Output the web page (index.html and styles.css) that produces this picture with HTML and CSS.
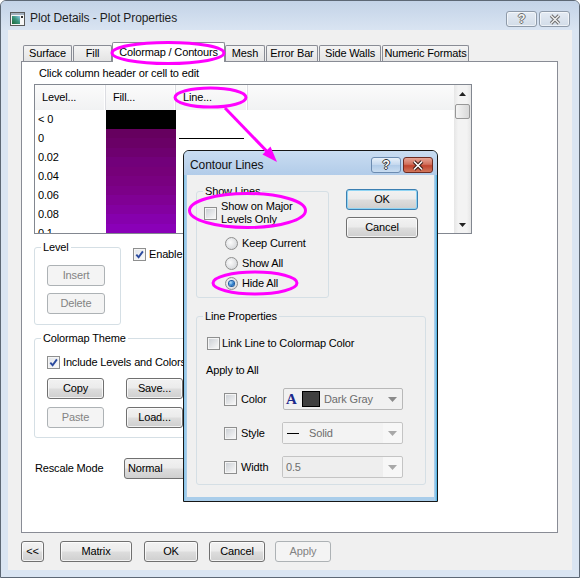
FILE: index.html
```html
<!DOCTYPE html>
<html lang="en">
<head>
<meta charset="utf-8">
<title>Plot Details - Plot Properties</title>
<link rel="stylesheet" href="styles.css">
</head>
<body>
<div class="win">
  <div class="titlebar">
    <svg class="appicon" width="15" height="14" viewBox="0 0 15 14">
      <defs>
        <linearGradient id="ig" x1="0" y1="1" x2="1" y2="0">
          <stop offset="0" stop-color="#1b6a3a"/>
          <stop offset="0.55" stop-color="#3c9680"/>
          <stop offset="1" stop-color="#93c6e8"/>
        </linearGradient>
      </defs>
      <rect x="0.5" y="0.5" width="14" height="13" fill="#f6f6f6" stroke="#5a5a5a"/>
      <rect x="1" y="1" width="13" height="2" fill="#a2afbe"/>
      <rect x="2" y="4" width="8" height="8" fill="url(#ig)"/>
      <rect x="11" y="4" width="2" height="2" fill="#333"/>
    </svg>
    <span class="wtitle">Plot Details - Plot Properties</span>
    <span class="capbtn help">?</span>
    <span class="capbtn close">
      <svg width="16" height="11" viewBox="0 0 16 11"><path d="M4 1.5 L12 9.5 M12 1.5 L4 9.5" stroke="#6e6e6e" stroke-width="3.4" fill="none"/><path d="M4 1.5 L12 9.5 M12 1.5 L4 9.5" stroke="#f2f2f2" stroke-width="1.4" fill="none"/></svg>
    </span>
  </div>

  <div class="client">
    <div class="tabs">
      <div class="tab t-surface">Surface</div>
      <div class="tab t-fill">Fill</div>
      <div class="tab sel t-cmap">Colormap / Contours</div>
      <div class="tab t-mesh">Mesh</div>
      <div class="tab t-err">Error Bar</div>
      <div class="tab t-side">Side Walls</div>
      <div class="tab t-num">Numeric Formats</div>
    </div>

    <div class="panel">
      <div class="hint">Click column header or cell to edit</div>

      <div class="grid">
        <div class="gcols">
          <div class="ghead">
            <div class="hc">Level...</div>
            <div class="hc">Fill...</div>
            <div class="hc">Line...</div>
            <div class="hc last"></div>
          </div>
          <div class="grow"><div class="lv">&lt; 0</div><div class="fill f0"></div><div class="ln"></div><div></div></div>
          <div class="grow"><div class="lv">0</div><div class="fill f1"></div><div class="ln"><span class="stroke"></span></div><div></div></div>
          <div class="grow"><div class="lv">0.02</div><div class="fill f2"></div><div class="ln"></div><div></div></div>
          <div class="grow"><div class="lv">0.04</div><div class="fill f3"></div><div class="ln"></div><div></div></div>
          <div class="grow"><div class="lv">0.06</div><div class="fill f4"></div><div class="ln"></div><div></div></div>
          <div class="grow"><div class="lv">0.08</div><div class="fill f5"></div><div class="ln"></div><div></div></div>
          <div class="grow"><div class="lv">0.1</div><div class="fill f6"></div><div class="ln"></div><div></div></div>
        </div>
        <div class="vscroll">
          <div class="sarrow"><svg width="7" height="4" viewBox="0 0 7 4"><path d="M0 4 L3.5 0 L7 4 Z" fill="#222"/></svg></div>
          <div class="thumb"></div>
          <div class="sgap"></div>
          <div class="sarrow"><svg width="7" height="4" viewBox="0 0 7 4"><path d="M0 0 L3.5 4 L7 0 Z" fill="#222"/></svg></div>
        </div>
      </div>

      <div class="row1">
        <div class="grp level">
          <div class="gt">Level</div>
          <div class="btn dis b-insert">Insert</div>
          <div class="btn dis b-delete">Delete</div>
        </div>
        <div class="chkrow enable"><span class="cb on"><svg width="9" height="9" viewBox="0 0 9 9"><path d="M1.3 4.6 L3.6 7.2 L7.9 1.4" stroke="#2b4a9e" stroke-width="1.9" fill="none"/></svg></span><span class="clbl">Enable Contours</span></div>
      </div>

      <div class="grp theme">
        <div class="gt">Colormap Theme</div>
        <div class="chkrow incl"><span class="cb on"><svg width="9" height="9" viewBox="0 0 9 9"><path d="M1.3 4.6 L3.6 7.2 L7.9 1.4" stroke="#2b4a9e" stroke-width="1.9" fill="none"/></svg></span><span class="clbl">Include Levels and Colors</span></div>
        <div class="brow first">
          <div class="btn b-57">Copy</div>
          <div class="btn b-57 b-right">Save...</div>
        </div>
        <div class="brow">
          <div class="btn dis b-57">Paste</div>
          <div class="btn b-57 b-right">Load...</div>
        </div>
      </div>

      <div class="rescale">
        <span class="rlbl">Rescale Mode</span>
        <div class="select">Normal</div>
      </div>
    </div>

    <div class="bottombar">
      <div class="btn bb-back">&lt;&lt;</div>
      <div class="btn bb-matrix">Matrix</div>
      <div class="btn bb-ok">OK</div>
      <div class="btn bb-cancel">Cancel</div>
      <div class="btn dis bb-apply">Apply</div>
    </div>
  </div>

  <div class="dlg">
    <div class="dtitle">
      <span class="dtext">Contour Lines</span>
      <span class="dcap dhelp">?</span>
      <span class="dcap dclose">
        <svg width="16" height="11" viewBox="0 0 16 11"><path d="M4 1.5 L12 9.5 M12 1.5 L4 9.5" stroke="#3a1a14" stroke-width="3.6" fill="none"/><path d="M4 1.5 L12 9.5 M12 1.5 L4 9.5" stroke="#ffffff" stroke-width="1.6" fill="none"/></svg>
      </span>
    </div>
    <div class="dclient">
      <div class="dtop">
        <div class="grp dg show">
          <div class="gt">Show Lines</div>
          <div class="chkrow major"><span class="cb"></span><span class="clbl two">Show on Major<br>Levels Only</span></div>
          <div class="radrow first"><span class="rb"></span><span class="rlb">Keep Current</span></div>
          <div class="radrow"><span class="rb"></span><span class="rlb">Show All</span></div>
          <div class="radrow"><span class="rb on"></span><span class="rlb">Hide All</span></div>
        </div>
        <div class="dbtns">
          <div class="btn def">OK</div>
          <div class="btn d-cancel">Cancel</div>
        </div>
      </div>
      <div class="grp dg props">
        <div class="gt">Line Properties</div>
        <div class="chkrow link"><span class="cb"></span><span class="clbl tight">Link Line to Colormap Color</span></div>
        <div class="applyall">Apply to All</div>
        <div class="prow first">
          <span class="cb"></span><span class="plbl wide">Color</span>
          <div class="combo ccolor">
            <span class="glyphA">A</span><span class="swatch"></span><span class="ctext">Dark Gray</span>
            <span class="carrow"><svg width="9" height="5" viewBox="0 0 9 5"><path d="M0 0 L9 0 L4.5 5 Z" fill="#8a8a8a"/></svg></span>
          </div>
        </div>
        <div class="prow">
          <span class="cb"></span><span class="plbl">Style</span>
          <div class="combo cdis">
            <div class="cfield"><span class="dash"></span><span class="ctext">Solid</span></div>
            <span class="carrow"><svg width="9" height="5" viewBox="0 0 9 5"><path d="M0 0 L9 0 L4.5 5 Z" fill="#a8a8a8"/></svg></span>
          </div>
        </div>
        <div class="prow">
          <span class="cb"></span><span class="plbl">Width</span>
          <div class="combo cdis">
            <div class="cfield gray"><span class="ctext dark">0.5</span></div>
            <span class="carrow"><svg width="9" height="5" viewBox="0 0 9 5"><path d="M0 0 L9 0 L4.5 5 Z" fill="#a8a8a8"/></svg></span>
          </div>
        </div>
      </div>
    </div>
  </div>

  <svg class="annot" width="580" height="578" viewBox="0 0 580 578">
    <g fill="none" stroke="#ff00ff" stroke-width="3">
      <ellipse cx="168" cy="53" rx="56" ry="10.5"/>
      <ellipse cx="210.5" cy="97.5" rx="35.5" ry="9.5"/>
      <line x1="225" y1="108" x2="268" y2="152.5"/>
      <ellipse cx="247.5" cy="210.5" rx="58" ry="17"/>
      <ellipse cx="255" cy="283" rx="42" ry="11"/>
    </g>
    <polygon points="277,162 262.5,154.5 270.5,146.5" fill="#ff00ff"/>
  </svg>
</div>
</body>
</html>
```

FILE: styles.css
```css
* { box-sizing: border-box; }
html, body { margin: 0; padding: 0; }
body {
  width: 580px;
  height: 578px;
  overflow: hidden;
  font-family: "Liberation Sans", Arial, sans-serif;
  font-size: 11px;
  letter-spacing: -0.15px;
  line-height: 13px;
  color: #000;
  background: #fff;
}

/* ---------- main window ---------- */
.win {
  position: relative;
  width: 580px;
  height: 578px;
  border: 1px solid #5d6875;
  border-radius: 6px 6px 0 0;
  background: #dae5f2;
  padding: 0 7px 7px;
}
.titlebar {
  height: 29px;
  margin: 0 -7px;
  padding: 0 9px;
  display: flex;
  align-items: flex-start;
  background: linear-gradient(#c3d3e7, #d9e4f2);
  border-radius: 5px 5px 0 0;
}
.appicon { flex: none; margin-top: 11px; }
.wtitle {
  flex: 1;
  margin: 10px 0 0 5px;
  font-size: 12px;
  letter-spacing: -0.1px;
  line-height: 15px;
  color: #1e1e1e;
}
.capbtn {
  flex: none;
  width: 31px;
  height: 16px;
  margin-top: 10px;
  border: 1px solid #8e9aa9;
  border-radius: 3px;
  background: linear-gradient(#e4ebf4, #d2dce8);
  box-shadow: inset 0 0 0 1px rgba(255,255,255,.6);
  display: flex;
  align-items: center;
  justify-content: center;
}
.capbtn.help {
  font-weight: bold;
  font-size: 12px;
  color: #f4f4f4;
  text-shadow: 1px 0 0 #6e6e6e, -1px 0 0 #6e6e6e, 0 1px 0 #6e6e6e, 0 -1px 0 #6e6e6e;
}
.capbtn.close { margin-left: 2px; }

.client {
  height: 540px;
  background: #f0f0f0;
  padding: 12px 0 0 13px;
}

/* ---------- tabs ---------- */
.tabs {
  display: flex;
  align-items: flex-end;
  height: 19px;
}
.tab {
  flex: none;
  height: 16px;
  border: 1px solid #898c95;
  border-bottom: none;
  border-radius: 2px 2px 0 0;
  background: linear-gradient(#f4f4f4, #e4e4e4);
  display: flex;
  align-items: center;
  justify-content: center;
  white-space: nowrap;
}
.tab.sel {
  height: 20px;
  margin-bottom: -1px;
  background: #fff;
  position: relative;
  z-index: 1;
}
.t-surface { width: 49px; margin-left: 2px; }
.t-fill { width: 39px; margin-left: 1px; }
.t-cmap { width: 113px; }
.t-mesh { width: 40px; }
.t-err { width: 52px; margin-left: 1px; }
.t-side { width: 62px; margin-left: 1px; }
.t-num { width: 87px; margin-left: 1px; }

/* ---------- tab panel ---------- */
.panel {
  width: 537px;
  height: 472px;
  border: 1px solid #898c95;
  background: #fff;
  padding: 5px 0 0 12px;
}
.hint { margin-left: 5px; }

.grid {
  margin-top: 4px;
  width: 438px;
  height: 150px;
  border: 1px solid #828790;
  display: flex;
  overflow: hidden;
}
.gcols { flex: 1; overflow: hidden; }
.ghead {
  display: grid;
  grid-template-columns: 71px 70px 72px 1fr;
  height: 25px;
  background: linear-gradient(#fbfbfb, #f1f2f3);
}
.hc {
  border-right: 1px solid #dcdde2;
  box-shadow: inset -1px 0 0 #fff;
  padding-left: 7px;
  display: flex;
  align-items: center;
}
.hc.last { border-right: none; box-shadow: none; }
.grow {
  display: grid;
  grid-template-columns: 71px 70px 72px 1fr;
  height: 19px;
}
.lv { padding-left: 3px; line-height: 19px; }
.fill { height: 19px; }
.f0 { background: #000; }
.f1 { background: linear-gradient(#66005f 50%, #6a0066 50%); }
.f2 { background: linear-gradient(#6e006f 50%, #72007a 50%); }
.f3 { background: linear-gradient(#760079 50%, #790080 50%); }
.f4 { background: linear-gradient(#7c0088 50%, #800094 50%); }
.f5 { background: linear-gradient(#8300a0 50%, #8600ad 50%); }
.f6 { background: linear-gradient(#8a00b8 50%, #8e00c6 50%); }
.ln { display: flex; align-items: center; }
.stroke {
  display: block;
  margin-left: 3px;
  width: 65px;
  height: 1px;
  background: #000;
}
.vscroll {
  flex: none;
  width: 17px;
  display: flex;
  flex-direction: column;
  align-items: center;
  background: linear-gradient(90deg, #e6e6e6, #f3f3f3 25%, #f3f3f3 75%, #e6e6e6);
}
.sarrow {
  height: 17px;
  width: 17px;
  display: flex;
  align-items: center;
  justify-content: center;
}
.thumb {
  margin-top: 2px;
  width: 15px;
  height: 15px;
  border: 1px solid #979797;
  border-radius: 2px;
  background: linear-gradient(90deg, #f4f4f4, #e6e6e6 50%, #d8d8d8);
}
.sgap { flex: 1; }

/* ---------- group boxes ---------- */
.grp {
  border: 1px solid #d5dfe5;
  border-radius: 3px;
}
.gt {
  display: table;
  margin: -7px 0 0 6px;
  padding: 0 2px;
  background: #fff;
  line-height: 13px;
}

.row1 {
  display: flex;
  align-items: flex-start;
  margin-top: 13px;
}
.grp.level {
  width: 87px;
  padding-bottom: 10px;
}
.b-insert, .b-delete { width: 58px; margin-left: 12px; }
.b-insert { margin-top: 11px; }
.b-delete { margin-top: 7px; }

.chkrow { display: flex; align-items: center; }
.chkrow.enable { margin: 1px 0 0 12px; white-space: nowrap; }
.clbl { margin-left: 3px; white-space: nowrap; }
.clbl.two { margin-left: 4px; line-height: 13px; }
.clbl.tight { margin-left: 2px; }

.grp.theme {
  width: 216px;
  margin-top: 13px;
  padding-bottom: 9px;
}
.chkrow.incl { margin: 11px 0 0 12px; }
.brow { display: flex; margin-top: 8px; }
.brow.first { margin-top: 9px; }
.b-57 { width: 57px; margin-left: 12px; }
.b-57.b-right { margin-left: 22px; }

.rescale {
  display: flex;
  align-items: center;
  margin-top: 20px;
  height: 21px;
}
.rlbl { width: 90px; padding-left: 1px; }
.select {
  width: 130px;
  height: 21px;
  border: 1px solid #707070;
  border-radius: 3px;
  background: linear-gradient(#f2f2f2, #ebebeb 48%, #dddddd 52%, #cfcfcf);
  padding-left: 3px;
  display: flex;
  align-items: center;
}

/* ---------- checkbox / radio ---------- */
.cb {
  flex: none;
  width: 13px;
  height: 13px;
  border: 1px solid #8e8f8f;
  padding: 1px;
  background: linear-gradient(135deg, #cdd1d6, #f7f7f7) content-box, #f5f5f5;
  display: flex;
}
.cb.on { background: linear-gradient(135deg, #e2e5ea, #fafafa) content-box, #f5f5f5; }
.cb svg { display: block; }
.rb {
  flex: none;
  width: 13px;
  height: 13px;
  border-radius: 50%;
  border: 1px solid #8f8f8f;
  background: radial-gradient(circle at 40% 40%, #fbfbfb, #d6d8db 80%);
  display: flex;
  align-items: center;
  justify-content: center;
}
.rb.on::after {
  content: "";
  width: 5px;
  height: 5px;
  border-radius: 50%;
  background: radial-gradient(circle at 35% 35%, #b5e0fa, #2a7ccd 55%, #0d4a8e);
  box-shadow: 0 0 0 1px #1c5aa0;
}
.rlb { margin-left: 4px; white-space: nowrap; }

/* ---------- buttons ---------- */
.btn {
  flex: none;
  height: 21px;
  border: 1px solid #707070;
  border-radius: 3px;
  background: linear-gradient(#f2f2f2, #ebebeb 48%, #dddddd 52%, #cfcfcf);
  box-shadow: inset 0 0 0 1px rgba(255,255,255,.75);
  display: flex;
  align-items: center;
  justify-content: center;
  white-space: nowrap;
}
.btn.dis {
  border-color: #adb2b5;
  background: #f4f4f4;
  box-shadow: none;
  color: #838383;
}
.btn.def {
  border-color: #3c7fb1;
  box-shadow: inset 0 0 0 1px #8fd4f3;
}

.bottombar {
  display: flex;
  margin-top: 8px;
}
.bb-back { width: 23px; }
.bb-matrix { width: 72px; margin-left: 16px; }
.bb-ok { width: 54px; margin-left: 12px; }
.bb-cancel { width: 56px; margin-left: 11px; }
.bb-apply { width: 56px; margin-left: 10px; }

/* ---------- Contour Lines dialog ---------- */
.dlg {
  position: absolute;
  left: 182px;
  top: 149px;
  width: 255px;
  height: 352px;
  border: 1px solid #161616;
  border-radius: 6px 6px 0 0;
  background: linear-gradient(90deg, #7fc4ea, #a9cdea 2px, #a9cdea calc(100% - 2px), #3fb0e4);
  padding: 0 3px 3px;
  z-index: 5;
}
.dtitle {
  height: 24px;
  margin: 0 -3px;
  padding: 0 4px 0 6px;
  display: flex;
  align-items: flex-start;
  background: linear-gradient(#c9dcf1, #b2cce9);
  border-radius: 5px 5px 0 0;
}
.dtext {
  flex: 1;
  margin-top: 7px;
  font-size: 12px;
  letter-spacing: -0.1px;
  line-height: 15px;
  color: #111;
}
.dcap {
  flex: none;
  width: 30px;
  height: 16px;
  margin-top: 6px;
  border-radius: 3px;
  display: flex;
  align-items: center;
  justify-content: center;
}
.dhelp {
  border: 1px solid #6c8bb0;
  background: linear-gradient(#e8f0f9, #c3d7ee 50%, #b1cbe8 51%, #c9dcf0);
  font-weight: bold;
  font-size: 12px;
  color: #fff;
  text-shadow: 1px 0 0 #333, -1px 0 0 #333, 0 1px 0 #333, 0 -1px 0 #333;
}
.dclose {
  margin-left: 2px;
  border: 1px solid #6d2b22;
  background: linear-gradient(#e6a596, #d2705c 45%, #c0442e 55%, #d1775c);
}
.dclient {
  height: 322px;
  background: #f0f0f0;
  padding-left: 9px;
  border-bottom: 1px solid #f0f0f0;
}
.dtop { display: flex; align-items: flex-start; }
.dg .gt { background: #f0f0f0; }
.grp.show {
  width: 133px;
  margin-top: 16px;
  padding-bottom: 7px;
}
.chkrow.major { margin: 2px 0 0 7px; }
.radrow {
  display: flex;
  align-items: center;
  height: 13px;
  margin: 7px 0 0 28px;
}
.radrow.first { margin-top: 11px; }
.dbtns { margin: 14px 0 0 17px; }
.dbtns .btn { width: 72px; }
.d-cancel { margin-top: 7px; }

.grp.props {
  width: 230px;
  margin-top: 18px;
  padding-bottom: 6px;
}
.chkrow.link { margin: 14px 0 0 10px; }
.applyall { margin: 14px 0 0 9px; }
.prow {
  display: flex;
  align-items: center;
  height: 22px;
  margin: 12px 0 0 27px;
}
.prow.first { margin-top: 11px; }
.plbl { width: 45px; padding-left: 4px; }
.plbl.wide { width: 46px; }
.combo {
  width: 121px;
  height: 22px;
  border: 1px solid #b8b8b8;
  border-radius: 2px;
  display: flex;
  align-items: center;
}
.ccolor {
  width: 120px;
  background: #f1f1f1;
  padding-left: 2px;
}
.glyphA {
  font-family: "Liberation Serif", "Times New Roman", serif;
  font-weight: bold;
  font-size: 15px;
  color: #1c2a8c;
  width: 16px;
}
.swatch {
  width: 18px;
  height: 16px;
  background: #404040;
  border: 1px solid #000;
}
.ctext { margin-left: 4px; color: #6d6d6d; }
.ctext.dark { color: #6d6d6d; margin-left: 3px; }
.carrow {
  margin-left: auto;
  width: 19px;
  display: flex;
  justify-content: center;
}
.cdis {
  border-color: #c4c4c4;
  background: #f7f7f7;
}
.cfield {
  height: 20px;
  width: 101px;
  background: #f3f3f3;
  display: flex;
  align-items: center;
}
.cfield.gray { background: #eeeeee; }
.dash {
  width: 12px;
  height: 1px;
  background: #000;
  margin-left: 4px;
}
.cfield .ctext { margin-left: 10px; }
.cfield .ctext.dark { margin-left: 3px; }

/* ---------- annotations ---------- */
.annot {
  position: absolute;
  left: -1px;
  top: -1px;
  z-index: 10;
  pointer-events: none;
}
```
